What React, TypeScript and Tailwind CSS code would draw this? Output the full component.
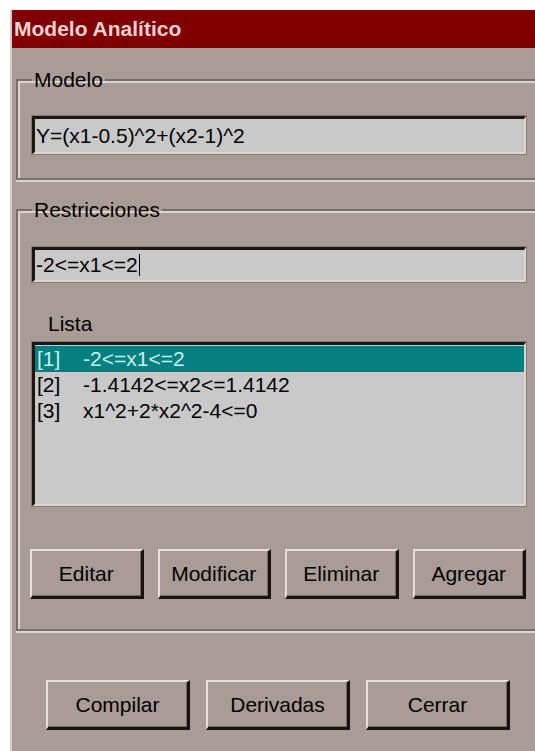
import React from "react";

const sunken =
  "bg-[#c9c9c9] border-t-[3px] border-l-[3px] border-b-2 border-r-2 border-t-[#1c1614] border-l-[#1c1614] border-b-[#ddd5d1] border-r-[#ddd5d1] shadow-[0_0_0_1px_#857974]";

const raised =
  "flex items-center justify-center h-[50px] bg-[#a99b95] border-t-2 border-l-2 border-t-[#e6deda] border-l-[#e6deda] border-b-[3px] border-r-[3px] border-b-[#1a1210] border-r-[#1a1210] shadow-[inset_-1px_-1px_0_#766a65] text-[21px] text-black";

const group =
  "border-t-2 border-l-2 border-b-2 border-r-0 border-[#7a6e69] shadow-[inset_2px_2px_0_#dcd3cf,0_2px_0_#dcd3cf] pl-[14px] pr-[9px] pt-0";

const legend = "px-[2px] text-[21px] leading-[24px] text-black";

const rows = [
  { idx: "[1]", expr: "-2<=x1<=2" },
  { idx: "[2]", expr: "-1.4142<=x2<=1.4142" },
  { idx: "[3]", expr: "x1^2+2*x2^2-4<=0" },
];

function Btn({ label, className }: { label: string; className: string }) {
  return <div className={`${raised} ${className}`}>{label}</div>;
}

export default function App() {
  return (
    <div
      className="w-[535px] h-[751px] bg-white pt-[10px] pl-[10px] overflow-hidden"
      style={{ fontFamily: '"Liberation Sans", Arial, sans-serif' }}
    >
      <div className="h-[741px] flex flex-col bg-[#a99b95] border-l-2 border-[#d6ccc8]">
        {/* title bar */}
        <div className="h-[38px] shrink-0 bg-[#800000] flex items-center pl-[2px] text-[21px] font-bold text-[#f2d0d0]">
          Modelo Analítico
        </div>

        <div className="flex flex-col pl-[4px]">
          {/* Modelo */}
          <fieldset className={`${group} mt-[20px] pb-[24px]`}>
            <legend className={legend}>Modelo</legend>
            <div className={`${sunken} mt-[24px] h-[38px] flex items-center pl-[1px] text-[21px] text-black`}>
              Y=(x1-0.5)^2+(x2-1)^2
            </div>
          </fieldset>

          {/* Restricciones */}
          <fieldset className={`${group} mt-[18px] pb-[30px]`}>
            <legend className={legend}>Restricciones</legend>
            <div className={`${sunken} mt-[25px] h-[35px] flex items-center pl-[1px] text-[21px] text-black`}>
              <span>-2&lt;=x1&lt;=2</span>
              <span className="w-[1px] h-[22px] bg-black ml-[1px]" />
            </div>

            <div className="mt-[30px] ml-[16px] text-[21px] leading-[24px] text-black">Lista</div>

            <div className={`${sunken} mt-[6px] h-[164px] pt-[1px] flex flex-col`}>
              {rows.map((r, i) => (
                <div
                  key={r.idx}
                  className={`h-[26px] flex items-center pl-[2px] text-[21px] ${
                    i === 0 ? "bg-[#058080] text-[#c6f2f0]" : "text-black"
                  }`}
                >
                  <span className="w-[46px]">{r.idx}</span>
                  <span>{r.expr}</span>
                </div>
              ))}
            </div>

            <div className="mt-[43px] -ml-[2px] flex gap-[14px]">
              <Btn label="Editar" className="flex-1" />
              <Btn label="Modificar" className="flex-1" />
              <Btn label="Eliminar" className="flex-1" />
              <Btn label="Agregar" className="flex-1" />
            </div>
          </fieldset>

          {/* dialog actions */}
          <div className="mt-[49px] ml-[30px] flex gap-[16px]">
            <Btn label="Compilar" className="w-[144px]" />
            <Btn label="Derivadas" className="w-[144px]" />
            <Btn label="Cerrar" className="w-[144px]" />
          </div>
        </div>
      </div>
    </div>
  );
}
